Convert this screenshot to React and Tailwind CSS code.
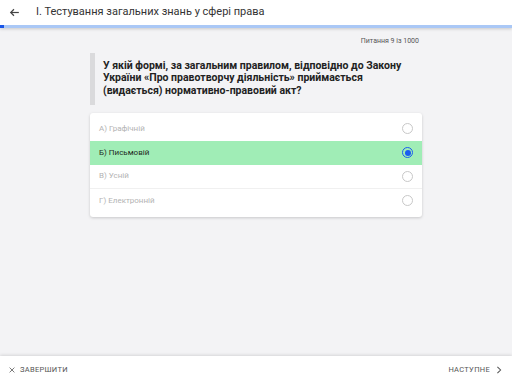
import React from "react";

const options = [
  { label: "А) Графічній", selected: false },
  { label: "Б) Письмовій", selected: true },
  { label: "В) Усній", selected: false },
  { label: "Г) Електронній", selected: false },
];

export default function App() {
  return (
    <div
      className="w-[512px] h-[384px] bg-[#f3f3f5] flex flex-col overflow-hidden"
      style={{ fontFamily: "Roboto, 'Liberation Sans', sans-serif" }}
    >
      <div className="relative z-10 bg-white shadow-[0_1px_3px_rgba(0,0,0,0.18)]">
        <div className="h-[25px] flex items-center">
          <svg className="ml-[8px] w-[13px] h-[13px]" viewBox="0 0 24 24" fill="none" stroke="#444" strokeWidth="2.2">
            <path d="M20 12H5" />
            <path d="M11 6l-6 6 6 6" />
          </svg>
          <span className="ml-[15px] text-[11px] text-[#333]">І. Тестування загальних знань у сфері права</span>
        </div>
        <div className="h-[3px] bg-[#aac8f6] flex">
          <div className="w-[4px] bg-[#1a56e8]" />
        </div>
      </div>

      <div className="flex-1 flex flex-col">
        <div className="flex justify-end pr-[93px] pt-[8px] text-[7px] text-[#555]">Питання 9 із 1000</div>
        <div className="mx-[90px] mt-[6px] border-l-[5px] border-[#dadadc] pl-[8px] h-[52px] flex items-center">
          <p className="text-[10.5px] leading-[12.5px] font-bold text-[#222]">
            У якій формі, за загальним правилом, відповідно до Закону України «Про правотворчу діяльність» приймається (видається) нормативно-правовий акт?
          </p>
        </div>
        <div className="mx-[90px] mt-[8px] bg-white rounded-[3px] shadow-[0_1px_3px_rgba(0,0,0,0.18)] py-[4px]">
          {options.map((o, i) => (
            <div
              key={i}
              className={`h-[24px] flex items-center justify-between pl-[9px] pr-[9px] ${o.selected ? "bg-[#a0edb6] text-[#1f2a22]" : "text-[#b3b3b3]"} ${i === 2 ? "border-b border-[#f0f0f0]" : ""}`}
            >
              <span className="text-[8px]">{o.label}</span>
              {o.selected ? (
                <span className="w-[11px] h-[11px] rounded-full border border-[#1a5cf0] flex items-center justify-center">
                  <span className="w-[6px] h-[6px] rounded-full bg-[#1a5cf0]" />
                </span>
              ) : (
                <span className="w-[11px] h-[11px] rounded-full border border-[#c8c8c8]" />
              )}
            </div>
          ))}
        </div>
      </div>

      <div className="h-[28px] bg-white shadow-[0_-1px_3px_rgba(0,0,0,0.12)] flex items-center justify-between pl-[9px] pr-[10px] text-[7.5px] text-[#555] tracking-[0.3px]">
        <div className="flex items-center gap-[5px]">
          <svg className="w-[6px] h-[6px]" viewBox="0 0 10 10" stroke="#555" strokeWidth="1.3">
            <path d="M1 1l8 8M9 1l-8 8" />
          </svg>
          <span>ЗАВЕРШИТИ</span>
        </div>
        <div className="flex items-center gap-[6px]">
          <span>НАСТУПНЕ</span>
          <svg className="w-[6px] h-[8px]" viewBox="0 0 6 10" fill="none" stroke="#555" strokeWidth="1.3">
            <path d="M1 1l4 4-4 4" />
          </svg>
        </div>
      </div>
    </div>
  );
}
